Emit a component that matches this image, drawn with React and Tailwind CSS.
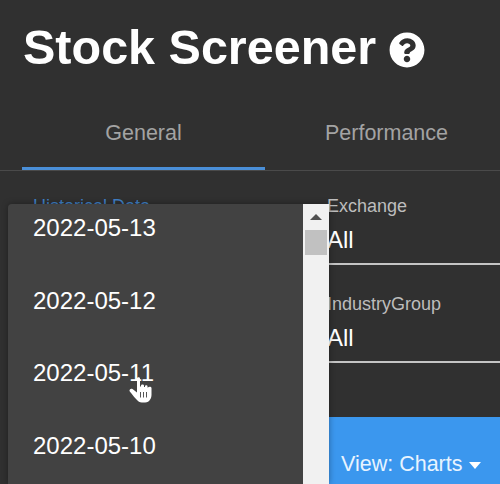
import React from "react";

const dates = ["2022-05-13", "2022-05-12", "2022-05-11", "2022-05-10"];

// --- select field in the right column ---
function Field({ label, value }) {
  return (
    <div className="flex flex-col">
      <label className="text-[18px] leading-[20px] text-[#bdbdbd]">{label}</label>
      <div className="mt-[6px] h-[43px] border-b-2 border-[#c4c4c4] text-[24px] leading-[36px] text-white">
        {value}
      </div>
    </div>
  );
}

function HandCursor() {
  return (
    <svg className="absolute left-[129px] top-[376px]" width="23" height="27" viewBox="0 0 23 27">
      <path
        d="M8 2.500C8 .8 11 .8 11 2.500V10.500H12V9.500C12 8 15 8 15 9.500V11H16V10.200C16 8.800 18.500 8.800 18.500 10.200V11.500H19C19.500 10.300 22.500 10.500 22.500 12V19C22.500 22 21 24 20 25C18 27 11 27 9 25C6.500 22.500 3.500 19 .8 15.500C-.3 13.800 1.800 11.800 3.500 13L8 16.500Z"
        fill="#fff"
      />
      <path d="M11.500 16V21.500M14.500 16V21.500M17.500 16V21.500" stroke="#555" strokeWidth="1" />
    </svg>
  );
}

export default function App() {
  return (
    <div className="relative h-[484px] w-[500px] overflow-hidden bg-[#303030] font-['Liberation_Sans',Arial,sans-serif]">
      <div className="flex items-center gap-[13px] pl-[23px] pt-[19px]">
        <h1 className="text-[48.500px] font-bold leading-[56px] text-white">Stock Screener</h1>
        <svg className="mt-[5px]" width="36" height="36" viewBox="0 0 512 512" fill="#fff">
          <path d="M504 256c0 137-111 248-248 248S8 393 8 256C8 119 119 8 256 8s248 111 248 248zM262.700 90c-54.500 0-89.300 23-116.500 63.800-3.500 5.300-2.400 12.400 2.700 16.300l34.700 26.300c5.200 3.900 12.600 3 16.700-2.100 17.900-22.700 30.100-35.800 57.300-35.800 20.400 0 45.700 13.100 45.700 33 0 15-12.400 22.700-32.600 34-23.600 13.200-54.800 29.700-54.800 70.900V300c0 6.600 5.400 12 12 12h56c6.600 0 12-5.400 12-12v-1.300c0-28.600 83.500-29.800 83.500-107.200C380 133.200 319.400 90 262.700 90zM256 339c-25.500 0-46.200 20.700-46.200 46.200 0 25.500 20.700 46.200 46.200 46.200s46.200-20.700 46.200-46.200c0-25.500-20.700-46.200-46.200-46.200z" />
        </svg>
      </div>

      <div className="mt-[20px] flex border-b border-[#4a4a4a] pl-[22px]">
        <div className="h-[75px] w-[243px] shrink-0 border-b-[3px] border-[#4a8fd8] pt-[26px] text-center text-[21.500px] leading-[24px] text-[#a3a3a3]">
          General
        </div>
        <div className="h-[75px] w-[243px] shrink-0 pt-[26px] text-center text-[21.500px] leading-[24px] text-[#a3a3a3]">
          Performance
        </div>
      </div>

      <div className="flex pl-[33px] pt-[25px]">
        <div className="w-[294px] text-[18px] leading-[20px] text-[#3f7fc4]">Historical Data</div>
        <div className="flex flex-1 flex-col gap-[29px]">
          <Field label="Exchange" value="All" />
          <Field label="IndustryGroup" value="All" />
        </div>
      </div>

      <div className="mt-[54px] ml-[329px] flex h-[70px] items-start bg-[#3b97ee] pl-[12px] pt-[35px] text-[21.500px] leading-[24px] text-[#e8f4ff]">
        View: Charts
        <svg className="ml-[7px] mt-[10px]" width="12" height="7" viewBox="0 0 12 7" fill="#fff">
          <path d="M0 0h12L6 7z" />
        </svg>
      </div>

      {/* open date dropdown */}
      <div className="absolute bottom-0 left-[8px] top-[204px] flex w-[321px] rounded-tl-[4px] shadow-[0_0_6px_rgba(0,0,0,0.35)]">
        <ul className="flex-1 overflow-hidden rounded-tl-[4px] bg-[#424242] pl-[25px] pt-[7px]">
          {dates.map((date) => (
            <li key={date} className="h-[72.500px] text-[24px] leading-[34px] text-white">
              {date}
            </li>
          ))}
        </ul>
        <div className="flex w-[26px] flex-col items-center bg-[#f1f1f1] px-[2px]">
          <svg className="mt-[10px]" width="12" height="6" viewBox="0 0 12 6" fill="#505050">
            <path d="M6 0l6 6H0z" />
          </svg>
          <div className="mt-[10px] h-[25px] w-full bg-[#c1c1c1]" />
        </div>
      </div>

      <HandCursor />
    </div>
  );
}
